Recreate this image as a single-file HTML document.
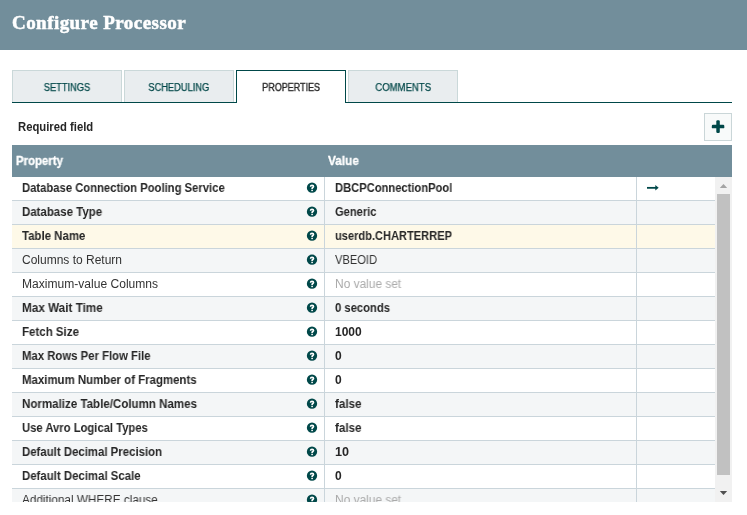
<!DOCTYPE html>
<html><head><meta charset="utf-8">
<style>
*{box-sizing:border-box;margin:0;padding:0}
html,body{width:747px;height:515px;overflow:hidden;background:#fff;font-family:"Liberation Sans",sans-serif;color:#262626}
.abs{position:absolute}
#hdr{left:0;top:0;width:747px;height:50px;background:#728e9b}
#title{will-change:transform;-webkit-text-stroke:0.5px #fff;left:12px;top:11px;letter-spacing:0.45px;font-family:"Liberation Serif",serif;font-weight:bold;font-size:19px;color:#fff;white-space:nowrap;line-height:24px}
.tab{top:70px;width:110px;height:32px;background:#e9edef;border:1px solid #cad8d9;border-bottom:none;font-size:10px;color:#004849;text-align:center;line-height:33px}
.tab span{display:inline-block;will-change:transform;-webkit-text-stroke:0.25px currentColor;transform:scaleX(0.93);transform-origin:50% 50%}
.tab.sel{background:#fff;border:1px solid #004849;border-bottom:none;color:#262626;height:33px;z-index:2}
#tabline{left:12px;top:102px;width:720px;height:1px;background:#004849}
#req{will-change:transform;left:18px;top:119px;font-size:12px;line-height:16px;white-space:nowrap}
#plus{left:704px;top:113px;width:28px;height:28px;border:1px solid #cad6d8;background:#f8fafa}
#th{left:12px;top:145px;width:720px;height:32px;background:#728e9b;color:#fff;font-size:12px}
#th span{position:absolute;will-change:transform;top:0;line-height:32px;color:#fff;-webkit-text-stroke:0.3px #fff}
#th span.b{transform:scaleX(0.95)}
#grid{left:12px;top:177px;width:703px;height:325px;overflow:hidden}
.row{position:absolute;left:0;width:703px;height:24px;border-bottom:1px solid #cad5db;font-size:12px;white-space:nowrap}
.row.even{background:#f4f6f7}
.row.sel{background:#fef9e8}
.c{position:absolute;top:0;height:23px;line-height:23px;transform-origin:0 50%;will-change:transform}
.c1{left:10px}
.c2{left:323px}
.b{font-weight:bold;transform:scaleX(0.933);transform-origin:0 50%;color:#262626}
.n{color:#333}
.unset{color:#aaa}
.help{position:absolute;left:294px;top:5px}
.vl{position:absolute;top:0;width:1px;height:325px;background:#cad5db}
#sb{left:715px;top:177px;width:17px;height:325px;background:#f1f1f1}
#thumb{left:717px;top:194px;width:13px;height:281px;background:#c1c1c1}

</style></head><body>
<div id="hdr" class="abs"></div>
<div id="title" class="abs">Configure Processor</div>
<div class="tab abs" style="left:12px"><span>SETTINGS</span></div>
<div class="tab abs" style="left:124px"><span>SCHEDULING</span></div>
<div id="tabline" class="abs"></div>
<div class="tab sel abs" style="left:236px"><span style="transform:scaleX(0.9);-webkit-text-stroke:0.35px #262626">PROPERTIES</span></div>
<div class="tab abs" style="left:348px"><span style="transform:scaleX(0.955)">COMMENTS</span></div>
<div id="req" class="abs"><span class="b" style="display:inline-block;transform:scaleX(0.94)">Required field</span></div>
<div id="plus" class="abs"><svg width="26" height="26" style="position:absolute;left:0;top:0"><rect x="6.8" y="10.85" width="12.5" height="3.5" rx="1.2" fill="#004849"/><rect x="11.3" y="6.3" width="3.5" height="12.6" rx="1.2" fill="#004849"/></svg></div>
<div id="th" class="abs"><span class="b" style="left:4px">Property</span><span class="b" style="left:316px;transform:scaleX(0.985)">Value</span></div>
<div id="grid" class="abs">
<div class="row" style="top:0px"><span class="c c1 b" style="transform:scaleX(0.938)">Database Connection Pooling Service</span><svg class="help" width="12" height="12" viewBox="0 0 12 12"><circle cx="6" cy="5.7" r="5.15" fill="#004849"/><path d="M4.55 4.85C4.55 3.6 5.25 3.3 6.05 3.3C6.95 3.3 7.55 3.85 7.55 4.5C7.55 5.45 6.1 5.55 6.1 6.5V7.05" stroke="#fff" stroke-width="1.6" fill="none"/><rect x="5.3" y="7.75" width="1.6" height="1.4" fill="#fff"/></svg><span class="c c2 b" style="transform:scaleX(0.931)">DBCPConnectionPool</span></div>
<div class="row even" style="top:24px"><span class="c c1 b" style="transform:scaleX(0.955)">Database Type</span><svg class="help" width="12" height="12" viewBox="0 0 12 12"><circle cx="6" cy="5.7" r="5.15" fill="#004849"/><path d="M4.55 4.85C4.55 3.6 5.25 3.3 6.05 3.3C6.95 3.3 7.55 3.85 7.55 4.5C7.55 5.45 6.1 5.55 6.1 6.5V7.05" stroke="#fff" stroke-width="1.6" fill="none"/><rect x="5.3" y="7.75" width="1.6" height="1.4" fill="#fff"/></svg><span class="c c2 b" style="transform:scaleX(0.927)">Generic</span></div>
<div class="row sel" style="top:48px"><span class="c c1 b" style="transform:scaleX(0.953)">Table Name</span><svg class="help" width="12" height="12" viewBox="0 0 12 12"><circle cx="6" cy="5.7" r="5.15" fill="#004849"/><path d="M4.55 4.85C4.55 3.6 5.25 3.3 6.05 3.3C6.95 3.3 7.55 3.85 7.55 4.5C7.55 5.45 6.1 5.55 6.1 6.5V7.05" stroke="#fff" stroke-width="1.6" fill="none"/><rect x="5.3" y="7.75" width="1.6" height="1.4" fill="#fff"/></svg><span class="c c2 b" style="transform:scaleX(0.923)">userdb.CHARTERREP</span></div>
<div class="row even" style="top:72px"><span class="c c1 n" style="transform:scaleX(1.0)">Columns to Return</span><svg class="help" width="12" height="12" viewBox="0 0 12 12"><circle cx="6" cy="5.7" r="5.15" fill="#004849"/><path d="M4.55 4.85C4.55 3.6 5.25 3.3 6.05 3.3C6.95 3.3 7.55 3.85 7.55 4.5C7.55 5.45 6.1 5.55 6.1 6.5V7.05" stroke="#fff" stroke-width="1.6" fill="none"/><rect x="5.3" y="7.75" width="1.6" height="1.4" fill="#fff"/></svg><span class="c c2 n" style="transform:scaleX(0.927)">VBEOID</span></div>
<div class="row" style="top:96px"><span class="c c1 n" style="transform:scaleX(1.005)">Maximum-value Columns</span><svg class="help" width="12" height="12" viewBox="0 0 12 12"><circle cx="6" cy="5.7" r="5.15" fill="#004849"/><path d="M4.55 4.85C4.55 3.6 5.25 3.3 6.05 3.3C6.95 3.3 7.55 3.85 7.55 4.5C7.55 5.45 6.1 5.55 6.1 6.5V7.05" stroke="#fff" stroke-width="1.6" fill="none"/><rect x="5.3" y="7.75" width="1.6" height="1.4" fill="#fff"/></svg><span class="c c2 unset" style="transform:scaleX(0.992)">No value set</span></div>
<div class="row even" style="top:120px"><span class="c c1 b" style="transform:scaleX(0.977)">Max Wait Time</span><svg class="help" width="12" height="12" viewBox="0 0 12 12"><circle cx="6" cy="5.7" r="5.15" fill="#004849"/><path d="M4.55 4.85C4.55 3.6 5.25 3.3 6.05 3.3C6.95 3.3 7.55 3.85 7.55 4.5C7.55 5.45 6.1 5.55 6.1 6.5V7.05" stroke="#fff" stroke-width="1.6" fill="none"/><rect x="5.3" y="7.75" width="1.6" height="1.4" fill="#fff"/></svg><span class="c c2 b" style="transform:scaleX(0.937)">0 seconds</span></div>
<div class="row" style="top:144px"><span class="c c1 b" style="transform:scaleX(0.959)">Fetch Size</span><svg class="help" width="12" height="12" viewBox="0 0 12 12"><circle cx="6" cy="5.7" r="5.15" fill="#004849"/><path d="M4.55 4.85C4.55 3.6 5.25 3.3 6.05 3.3C6.95 3.3 7.55 3.85 7.55 4.5C7.55 5.45 6.1 5.55 6.1 6.5V7.05" stroke="#fff" stroke-width="1.6" fill="none"/><rect x="5.3" y="7.75" width="1.6" height="1.4" fill="#fff"/></svg><span class="c c2 b" style="transform:scaleX(1.0)">1000</span></div>
<div class="row even" style="top:168px"><span class="c c1 b" style="transform:scaleX(0.945)">Max Rows Per Flow File</span><svg class="help" width="12" height="12" viewBox="0 0 12 12"><circle cx="6" cy="5.7" r="5.15" fill="#004849"/><path d="M4.55 4.85C4.55 3.6 5.25 3.3 6.05 3.3C6.95 3.3 7.55 3.85 7.55 4.5C7.55 5.45 6.1 5.55 6.1 6.5V7.05" stroke="#fff" stroke-width="1.6" fill="none"/><rect x="5.3" y="7.75" width="1.6" height="1.4" fill="#fff"/></svg><span class="c c2 b" style="transform:scaleX(0.98)">0</span></div>
<div class="row" style="top:192px"><span class="c c1 b" style="transform:scaleX(0.952)">Maximum Number of Fragments</span><svg class="help" width="12" height="12" viewBox="0 0 12 12"><circle cx="6" cy="5.7" r="5.15" fill="#004849"/><path d="M4.55 4.85C4.55 3.6 5.25 3.3 6.05 3.3C6.95 3.3 7.55 3.85 7.55 4.5C7.55 5.45 6.1 5.55 6.1 6.5V7.05" stroke="#fff" stroke-width="1.6" fill="none"/><rect x="5.3" y="7.75" width="1.6" height="1.4" fill="#fff"/></svg><span class="c c2 b" style="transform:scaleX(0.98)">0</span></div>
<div class="row even" style="top:216px"><span class="c c1 b" style="transform:scaleX(0.962)">Normalize Table/Column Names</span><svg class="help" width="12" height="12" viewBox="0 0 12 12"><circle cx="6" cy="5.7" r="5.15" fill="#004849"/><path d="M4.55 4.85C4.55 3.6 5.25 3.3 6.05 3.3C6.95 3.3 7.55 3.85 7.55 4.5C7.55 5.45 6.1 5.55 6.1 6.5V7.05" stroke="#fff" stroke-width="1.6" fill="none"/><rect x="5.3" y="7.75" width="1.6" height="1.4" fill="#fff"/></svg><span class="c c2 b" style="transform:scaleX(0.967)">false</span></div>
<div class="row" style="top:240px"><span class="c c1 b" style="transform:scaleX(0.937)">Use Avro Logical Types</span><svg class="help" width="12" height="12" viewBox="0 0 12 12"><circle cx="6" cy="5.7" r="5.15" fill="#004849"/><path d="M4.55 4.85C4.55 3.6 5.25 3.3 6.05 3.3C6.95 3.3 7.55 3.85 7.55 4.5C7.55 5.45 6.1 5.55 6.1 6.5V7.05" stroke="#fff" stroke-width="1.6" fill="none"/><rect x="5.3" y="7.75" width="1.6" height="1.4" fill="#fff"/></svg><span class="c c2 b" style="transform:scaleX(0.967)">false</span></div>
<div class="row even" style="top:264px"><span class="c c1 b" style="transform:scaleX(0.95)">Default Decimal Precision</span><svg class="help" width="12" height="12" viewBox="0 0 12 12"><circle cx="6" cy="5.7" r="5.15" fill="#004849"/><path d="M4.55 4.85C4.55 3.6 5.25 3.3 6.05 3.3C6.95 3.3 7.55 3.85 7.55 4.5C7.55 5.45 6.1 5.55 6.1 6.5V7.05" stroke="#fff" stroke-width="1.6" fill="none"/><rect x="5.3" y="7.75" width="1.6" height="1.4" fill="#fff"/></svg><span class="c c2 b" style="transform:scaleX(1.05)">10</span></div>
<div class="row" style="top:288px"><span class="c c1 b" style="transform:scaleX(0.951)">Default Decimal Scale</span><svg class="help" width="12" height="12" viewBox="0 0 12 12"><circle cx="6" cy="5.7" r="5.15" fill="#004849"/><path d="M4.55 4.85C4.55 3.6 5.25 3.3 6.05 3.3C6.95 3.3 7.55 3.85 7.55 4.5C7.55 5.45 6.1 5.55 6.1 6.5V7.05" stroke="#fff" stroke-width="1.6" fill="none"/><rect x="5.3" y="7.75" width="1.6" height="1.4" fill="#fff"/></svg><span class="c c2 b" style="transform:scaleX(0.98)">0</span></div>
<div class="row even" style="top:312px"><span class="c c1 n" style="transform:scaleX(0.979)">Additional WHERE clause</span><svg class="help" width="12" height="12" viewBox="0 0 12 12"><circle cx="6" cy="5.7" r="5.15" fill="#004849"/><path d="M4.55 4.85C4.55 3.6 5.25 3.3 6.05 3.3C6.95 3.3 7.55 3.85 7.55 4.5C7.55 5.45 6.1 5.55 6.1 6.5V7.05" stroke="#fff" stroke-width="1.6" fill="none"/><rect x="5.3" y="7.75" width="1.6" height="1.4" fill="#fff"/></svg><span class="c c2 unset" style="transform:scaleX(0.992)">No value set</span></div>
<div class="vl" style="left:312px"></div>
<div class="vl" style="left:624px"></div>
<svg style="position:absolute;left:634px;top:7px" width="14" height="8" viewBox="0 0 14 8"><path d="M1 3.85H10" stroke="#004849" stroke-width="1.8"/><path d="M9.3 1.1L12.7 3.85L9.3 6.6Z" fill="#004849"/></svg>
</div>
<div id="sb" class="abs"></div>
<svg class="abs" style="left:715px;top:177px" width="17" height="17"><path d="M4.8 11.1L8.5 7.1L12.2 11.1Z" fill="#a3a3a3"/></svg>
<div id="thumb" class="abs"></div>
<svg class="abs" style="left:715px;top:485px" width="17" height="17"><path d="M4.8 5.9L8.5 9.9L12.2 5.9Z" fill="#505050"/></svg>
</body></html>
